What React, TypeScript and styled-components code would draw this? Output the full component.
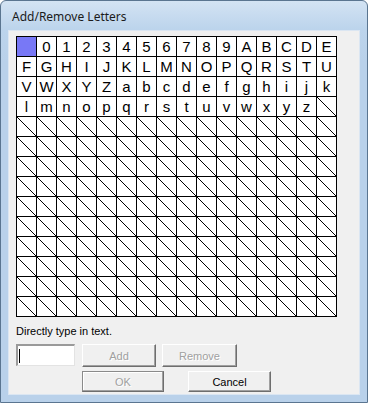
import styled, { createGlobalStyle } from "styled-components";

const GlobalStyle = createGlobalStyle`
  html, body {
    margin: 0;
    padding: 0;
    background: #ffffff;
  }
`;

const ROW1 = ["", "0", "1", "2", "3", "4", "5", "6", "7", "8", "9", "A", "B", "C", "D", "E"];
const ROW2 = "FGHIJKLMNOPQRSTU".split("");
const ROW3 = "VWXYZabcdefghijk".split("");
const ROW4 = "lmnopqrstuvwxyz".split("");

const COLS = 16;
const ROWS = 14;

const buildCells = (): (string | null)[] => {
  const filled: string[] = [...ROW1, ...ROW2, ...ROW3, ...ROW4];
  const cells: (string | null)[] = [];
  for (let i = 0; i < COLS * ROWS; i++) {
    cells.push(i < filled.length ? filled[i] : null);
  }
  return cells;
};

const App = (): JSX.Element => {
  const cells = buildCells();
  return (
    <>
      <GlobalStyle />
      <Window>
        <TitleBar>Add/Remove Letters</TitleBar>
        <Client>
          <LetterGrid>
            {cells.map((c, i) =>
              i === 0 ? (
                <Cell key={i} $selected />
              ) : c === null ? (
                <Cell key={i}>
                  <svg width="19" height="19" viewBox="0 0 19 19">
                    <line
                      x1="0"
                      y1="0"
                      x2="19"
                      y2="19"
                      stroke="#000"
                      strokeWidth="1"
                      shapeRendering="crispEdges"
                    />
                  </svg>
                </Cell>
              ) : (
                <Cell key={i}>{c}</Cell>
              )
            )}
          </LetterGrid>

          <Label>Directly type in text.</Label>

          <InputRow>
            <TextBox>
              <Caret />
            </TextBox>
            <Button $width={74} $disabled>
              Add
            </Button>
            <Button $width={75} $disabled>
              Remove
            </Button>
          </InputRow>

          <ButtonRow>
            <Button $width={82} $height={21} $disabled $default>
              OK
            </Button>
            <Button $width={83} $height={21}>
              Cancel
            </Button>
          </ButtonRow>
        </Client>
      </Window>
    </>
  );
};

const Window = styled.div`
  width: 368px;
  height: 403px;
  box-sizing: border-box;
  display: flex;
  flex-direction: column;
  border: 1px solid #5a7590;
  border-radius: 6px 6px 0 0;
  background: linear-gradient(
    to bottom,
    #d3e3f3 0px,
    #bcd4ec 28px,
    #b9d1ea 60px,
    #b9d1ea 100%
  );
  padding: 0 7px 7px 7px;
  font-family: "Liberation Sans", Arial, sans-serif;
`;

const TitleBar = styled.div`
  height: 29px;
  display: flex;
  align-items: center;
  padding-left: 4px;
  padding-top: 2px;
  box-sizing: border-box;
  font-family: "Noto Sans", "Open Sans", sans-serif;
  font-size: 12px;
  color: #1b1b1b;
`;

const Client = styled.div`
  flex: 1;
  display: flex;
  flex-direction: column;
  background: #f0f0f0;
  border: 1px solid #dbe6f2;
  padding: 5px 0 0 7px;
`;

const LetterGrid = styled.div`
  display: grid;
  grid-template-columns: repeat(16, 20px);
  grid-auto-rows: 20px;
  width: max-content;
  border-top: 1px solid #000;
  border-left: 1px solid #000;
  background: #ffffff;
`;

const Cell = styled.div<{ $selected?: boolean }>`
  border-right: 1px solid #000;
  border-bottom: 1px solid #000;
  display: flex;
  align-items: center;
  justify-content: center;
  font-family: "Liberation Sans", Arial, sans-serif;
  font-size: 15px;
  color: #000;
  background: ${(p) => (p.$selected ? "#7878f6" : "#ffffff")};
  overflow: hidden;

  svg {
    display: block;
  }
`;

const Label = styled.div`
  margin-top: 8px;
  font-size: 11px;
  line-height: 13px;
  color: #000;
`;

const InputRow = styled.div`
  display: flex;
  align-items: flex-start;
  margin-top: 6px;
  gap: 6px;
`;

const TextBox = styled.div`
  width: 59px;
  height: 22px;
  box-sizing: border-box;
  background: #fff;
  border-top: 2px solid #9a9a9a;
  border-left: 2px solid #9a9a9a;
  border-right: 1px solid #e3e3e3;
  border-bottom: 1px solid #e3e3e3;
  display: flex;
  align-items: center;
  padding-left: 1px;
  margin-right: 1px;
`;

const Caret = styled.span`
  width: 1px;
  height: 14px;
  background: #000;
`;

const ButtonRow = styled.div`
  display: flex;
  margin-top: 4px;
  margin-left: 66px;
  gap: 24px;
`;

const Button = styled.div<{
  $width: number;
  $height?: number;
  $disabled?: boolean;
  $default?: boolean;
}>`
  width: ${(p) => p.$width}px;
  height: ${(p) => p.$height ?? 23}px;
  box-sizing: border-box;
  display: flex;
  align-items: center;
  justify-content: center;
  background: #f0f0f0;
  border-top: 1px solid ${(p) => (p.$default ? "#8a8a8a" : "#ffffff")};
  border-left: 1px solid ${(p) => (p.$default ? "#8a8a8a" : "#ffffff")};
  border-right: 1px solid #6e6e6e;
  border-bottom: 1px solid #6e6e6e;
  box-shadow: inset -1px -1px 0 #a0a0a0
    ${(p) => (p.$default ? ", inset 1px 1px 0 #ffffff" : "")};
  font-size: 11px;
  color: ${(p) => (p.$disabled ? "#a0a0a0" : "#000")};
  text-shadow: ${(p) => (p.$disabled ? "1px 1px 0 #ffffff" : "none")};
`;

export default App;
